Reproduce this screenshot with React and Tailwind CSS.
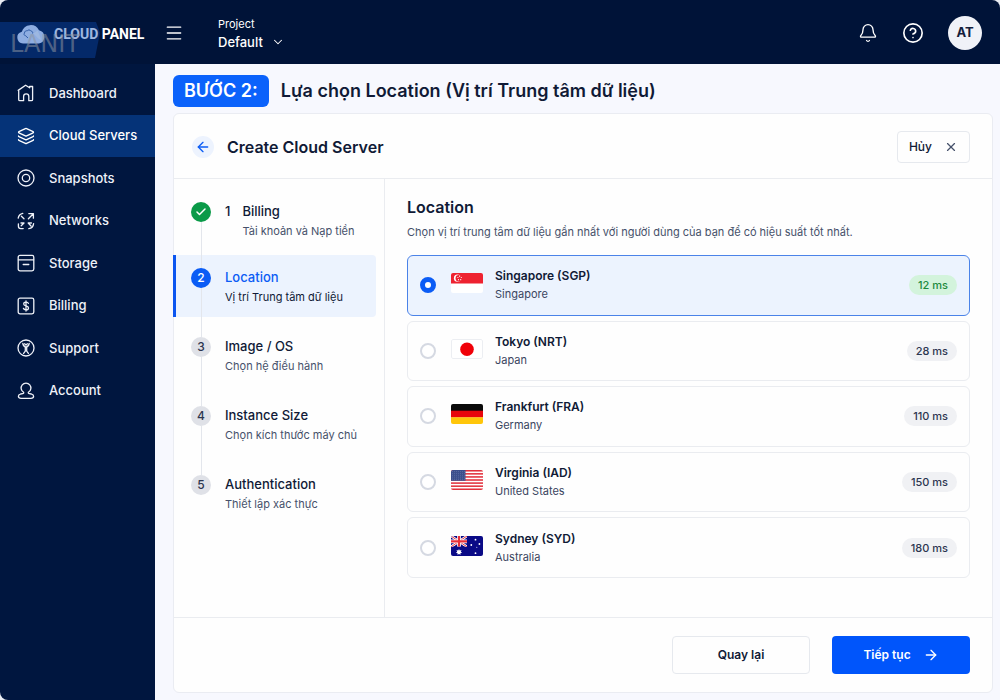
import { useState } from "react";
import { ArrowLeft, ArrowRight, Bell, Check, ChevronDown, CircleHelp, Layers, Menu, X } from "lucide-react";

const MENU = [
  { id: "dashboard", label: "Dashboard", icon: IconHome },
  { id: "servers", label: "Cloud Servers", icon: IconLayers },
  { id: "snapshots", label: "Snapshots", icon: IconSnapshots },
  { id: "networks", label: "Networks", icon: IconNetworks },
  { id: "storage", label: "Storage", icon: IconStorage },
  { id: "billing", label: "Billing", icon: IconBilling },
  { id: "support", label: "Support", icon: IconSupport },
  { id: "account", label: "Account", icon: IconAccount },
];

const STEPS = [
  { num: 1, title: "Billing", text: "Tài khoản và Nạp tiền" },
  { num: 2, title: "Location", text: "Vị trí Trung tâm dữ liệu" },
  { num: 3, title: "Image / OS", text: "Chọn hệ điều hành" },
  { num: 4, title: "Instance Size", text: "Chọn kích thước máy chủ" },
  { num: 5, title: "Authentication", text: "Thiết lập xác thực" },
];

const LOCATIONS = [
  { id: "sgp", name: "Singapore (SGP)", country: "Singapore", ping: 12, flag: FlagSingapore },
  { id: "nrt", name: "Tokyo (NRT)", country: "Japan", ping: 28, flag: FlagJapan },
  { id: "fra", name: "Frankfurt (FRA)", country: "Germany", ping: 110, flag: FlagGermany },
  { id: "iad", name: "Virginia (IAD)", country: "United States", ping: 150, flag: FlagUsa },
  { id: "syd", name: "Sydney (SYD)", country: "Australia", ping: 180, flag: FlagAustralia },
];

/* Sidebar icons */
function Icon({ children }) {
  return (
    <svg
      viewBox="0 0 18 18"
      className="h-[18px] w-[18px] shrink-0"
      fill="none"
      stroke="currentColor"
      strokeWidth="1.3"
      strokeLinecap="round"
      strokeLinejoin="round"
      aria-hidden="true"
    >
      {children}
    </svg>
  );
}

function IconHome() {
  return (
    <Icon>
      <path d="M1.2 6.4 8.6 1.2l4 2.6V2.500h3v13a1.200 1.200 0 0 1-1.200 1.200h-2.600v-4.200a2.600 2.600 0 0 0-5.200 0v4.200H2.900a1.200 1.200 0 0 1-1.200-1.200V6.100" />
    </Icon>
  );
}

function IconLayers() {
  return <Layers className="h-[18px] w-[18px] shrink-0" strokeWidth={1.7} aria-hidden="true" />;
}

function IconSnapshots() {
  return (
    <Icon>
      <circle cx="9" cy="9" r="8" />
      <circle cx="9" cy="9" r="3.7" />
    </Icon>
  );
}

function IconNetworks() {
  return (
    <Icon>
      <path d="M1.200 6.200c.4-2.400 2-4.200 4.600-4.800M4.400 4.200 7 6.800" />
      <path d="M11.800 1.600h4.600v4.600M16 2l-4.600 4.800" />
      <path d="M1.400 11.800v2.400c0 1.400 1 2.400 2.400 2.400h2.400M4.200 13.800 7 11H4" />
      <path d="M16.600 11.600c-.3 2.800-2 4.700-4.800 5M14 14l-2.800-3h3.200" />
    </Icon>
  );
}

function IconStorage() {
  return (
    <Icon>
      <rect x="1.2" y="1.4" width="15.6" height="15.4" rx="1.8" />
      <path d="M1.4 5.8h15.2M6.2 10.5h5.6" />
    </Icon>
  );
}

function IconBilling() {
  return (
    <Icon>
      <rect x="1.2" y="1.2" width="15.6" height="15.6" rx="1.8" />
      <path d="M11.4 6.4c-.3-.9-1.2-1.3-2.4-1.3-1.4 0-2.3.7-2.3 1.8 0 2.6 4.8 1.4 4.8 4 0 1.2-1 1.9-2.5 1.9-1.3 0-2.3-.5-2.6-1.5M9 3.9v10.2" />
    </Icon>
  );
}

function IconSupport() {
  return (
    <Icon>
      <circle cx="9" cy="9" r="8" />
      <path d="M5.800 4.400C6 6.400 7.200 7.600 9 8.400c1.800-.8 3-2 3.200-4M7.600 4.800 9 6l1.400-1.200M8.300 8.400v3.800L6.600 14.400M9.700 8.400v3.800l1.700 2.200" />
    </Icon>
  );
}

function IconAccount() {
  return (
    <Icon>
      <path d="M6.600 10.200a4.900 4.900 0 1 1 4.800 0c-.4.7 0 1.200 1 1.400l2 .4c1.400.4 2.200 1.200 2.200 2.300 0 1.300-1 2-2.600 2H4c-1.600 0-2.600-.7-2.600-2 0-1.100.8-1.900 2.200-2.300l2-.4c1-.2 1.400-.7 1-1.400Z" />
    </Icon>
  );
}

/* Flags */
function FlagFrame({ children }) {
  return (
    <svg viewBox="0 0 32 20" className="mb-1 h-5 w-8 shrink-0 rounded-[2px]" aria-hidden="true">
      {children}
    </svg>
  );
}

function FlagSingapore() {
  return (
    <FlagFrame>
      <rect width="32" height="20" fill="#fff" />
      <rect width="32" height="10.500" fill="#ee2230" />
      <circle cx="6.500" cy="5.200" r="3.600" fill="#fff" />
      <circle cx="7.800" cy="5.200" r="3.200" fill="#ee2230" />
      <g fill="#fff">
        <circle cx="8.600" cy="3.200" r=".6" />
        <circle cx="10.300" cy="4.500" r=".6" />
        <circle cx="9.700" cy="6.700" r=".6" />
        <circle cx="7.500" cy="6.700" r=".6" />
        <circle cx="6.900" cy="4.500" r=".6" />
      </g>
    </FlagFrame>
  );
}

function FlagJapan() {
  return (
    <FlagFrame>
      <rect x=".5" y=".5" width="31" height="19" rx="1.500" fill="#fff" stroke="#eceef2" />
      <circle cx="16" cy="10.300" r="6.800" fill="#f00008" />
    </FlagFrame>
  );
}

function FlagGermany() {
  return (
    <FlagFrame>
      <rect width="32" height="7" fill="#0a0a0a" />
      <rect y="6.700" width="32" height="6.800" fill="#e8060c" />
      <rect y="13.300" width="32" height="6.700" fill="#ffc60a" />
    </FlagFrame>
  );
}

function FlagUsa() {
  return (
    <FlagFrame>
      <rect width="32" height="20" fill="#fff" />
      {[0, 1, 2, 3, 4, 5, 6].map((i) => (
        <rect key={i} y={i * 3.08} width="32" height="1.540" fill="#e2303c" />
      ))}
      <rect width="14.500" height="10.800" fill="#3c4f8c" />
      {[1.6, 3.7, 5.8, 7.9, 9.7].map((y) => (
        <path key={y} d={`M1 ${y}h13`} stroke="#8492bf" strokeWidth=".6" strokeDasharray=".7 1.3" />
      ))}
    </FlagFrame>
  );
}

function FlagAustralia() {
  return (
    <FlagFrame>
      <rect width="32" height="20" fill="#0a0a86" />
      <svg width="16" height="10.800" viewBox="0 0 16 10.800">
        <path d="M0 0 16 10.800M16 0 0 10.800" stroke="#fff" strokeWidth="2.400" />
        <path d="M0 0 16 10.800M16 0 0 10.800" stroke="#e8303a" strokeWidth="1" />
        <path d="M8 0v10.800M0 5.400h16" stroke="#fff" strokeWidth="3.800" />
        <path d="M8 0v10.800M0 5.400h16" stroke="#e8303a" strokeWidth="2.200" />
      </svg>
      <path
        d="m8 13 .8 1.500 1.700-.4-.7 1.600 1.400 1-1.700.4v1.700L8 17.900l-1.500.9v-1.700l-1.700-.4 1.400-1-.7-1.600 1.700.4Z"
        fill="#fff"
      />
      <g fill="#fff">
        <circle cx="24.500" cy="3.700" r=".9" />
        <circle cx="20.300" cy="9" r=".9" />
        <circle cx="28.400" cy="8" r=".9" />
        <circle cx="25.800" cy="11.300" r=".5" />
        <circle cx="24.500" cy="17.200" r=".9" />
      </g>
    </FlagFrame>
  );
}

/* Brand with the translucent LANIT ribbon laid over it */
function Brand() {
  return (
    <a href="#" className="relative flex h-full w-[155px] shrink-0 items-center pt-1 pl-4">
      <svg viewBox="0 0 30 20" className="h-5 w-[30px] shrink-0" aria-hidden="true">
        <path
          d="M7 19.500a6 6 0 0 1-1.200-11.800A9.300 9.300 0 0 1 23 6.200a6.800 6.800 0 0 1-.2 13.300Z"
          fill="#e6efff"
        />
        <path
          d="M8.500 9c0-1.700 1.400-2.600 2.700-2.100.6-1.300 3-1.300 3.700.2 1.500 0 2.200 1.200 1.600 2.400M8.500 9c-1 1.200-.3 2.600 1 2.700l2.500 2.300"
          fill="none"
          stroke="#3c5c94"
          strokeWidth=".9"
        />
        <path d="m17.500 9.500 4.200-3 3.600 9.500-3-1.500Z" fill="#fff" />
      </svg>
      <span className="ml-2 font-['Roboto','Liberation_Sans',sans-serif] text-[14px] font-bold whitespace-nowrap text-white">
        CLOUD PANEL
      </span>
      <span className="absolute top-[22px] left-0 flex h-9 w-[100px] items-center bg-[#0b4cb4]/40 pt-2 pl-[10px] [clip-path:polygon(0_0,96%_0,100%_30%,95%_100%,0_100%)]">
        <span className="font-['DejaVu_Sans','Inter',sans-serif] text-[24px] leading-7 text-[#8d939f]/55">
          LANIT
        </span>
      </span>
    </a>
  );
}

function Header() {
  return (
    <header className="flex h-16 items-center rounded-t-lg bg-[#001338] text-white">
      <Brand />
      <button type="button" aria-label="Menu" className="ml-[9px] pt-[2px]">
        <Menu className="h-5 w-5" strokeWidth={1.6} />
      </button>
      <button type="button" className="ml-[34px] flex flex-col pt-1 text-left">
        <span className="text-[11px] leading-4">Project</span>
        <span className="flex items-center gap-2 text-[13px] leading-5 font-medium">
          Default
          <ChevronDown className="h-[14px] w-[14px]" strokeWidth={1.8} />
        </span>
      </button>
      <div className="mr-[18px] ml-auto flex items-center gap-6 pt-[2px]">
        <button type="button" aria-label="Notifications">
          <Bell className="h-5 w-5" strokeWidth={1.6} />
        </button>
        <button type="button" aria-label="Help">
          <CircleHelp className="h-[22px] w-[22px]" strokeWidth={1.8} />
        </button>
        <button
          type="button"
          className="h-[34px] w-[34px] rounded-full bg-[#f0f2f8] text-[13px] font-bold text-[#14203c]"
        >
          AT
        </button>
      </div>
    </header>
  );
}

function Sidebar() {
  return (
    <aside className="w-[155px] shrink-0 rounded-bl-lg bg-[#00163f] pt-2 text-white">
      <nav className="grid h-[340px] auto-rows-fr">
        {MENU.map(({ id, label, icon: ItemIcon }) => (
          <a
            key={id}
            href={"#" + id}
            className={
              id === "servers"
                ? "flex items-center gap-[14px] bg-[#053378] pl-[17px] text-[13px] font-medium"
                : "flex items-center gap-[14px] pl-[17px] text-[13px] font-medium text-[#eef1f8]"
            }
          >
            <ItemIcon />
            {label}
          </a>
        ))}
      </nav>
    </aside>
  );
}

function Step({ step, current, last }) {
  const done = step.num < current;
  const active = step.num === current;

  return (
    <li>
      <div
        className={
          active
            ? "-ml-px flex h-[62px] rounded-r border-l-[3px] border-[#0b55f0] bg-[#ecf3fe] pl-[15px]"
            : "-ml-px flex h-[62px] border-l-[3px] border-transparent pl-[15px]"
        }
      >
        <div className="flex w-5 flex-col items-center">
          <div className={step.num === 1 ? "h-[13px] w-px" : "h-[13px] w-px bg-[#e3e6ec]"} />
          {done ? (
            <span className="flex h-5 w-5 items-center justify-center rounded-full bg-[#0a9a48] text-white">
              <Check className="h-3 w-3" strokeWidth={3} />
            </span>
          ) : (
            <span
              className={
                active
                  ? "flex h-5 w-5 items-center justify-center rounded-full bg-[#0b5cf5] text-[12px] font-medium text-white"
                  : "flex h-5 w-5 items-center justify-center rounded-full bg-[#dfe1e7] text-[12px] font-medium text-[#2c3650]"
              }
            >
              {step.num}
            </span>
          )}
          {!last && <div className="w-px flex-1 bg-[#e3e6ec]" />}
        </div>
        <div className="flex gap-3 pt-3 pl-[14px]">
          {done && <span className="text-[13px] leading-5 font-medium text-[#101a36]">{step.num}</span>}
          <div>
            <p
              className={
                active
                  ? "text-[13px] leading-5 font-medium text-[#0b5cf5]"
                  : "text-[13px] leading-5 font-medium text-[#101a36]"
              }
            >
              {step.title}
            </p>
            <p
              className={
                active
                  ? "text-[11px] leading-5 whitespace-nowrap text-[#101a36]"
                  : "text-[11px] leading-5 whitespace-nowrap text-[#46516a]"
              }
            >
              {step.text}
            </p>
          </div>
        </div>
      </div>
      {!last && <div className={done ? "ml-[27px] h-1 w-px bg-[#e3e6ec]" : "ml-[27px] h-[7px] w-px bg-[#e3e6ec]"} />}
    </li>
  );
}

function LocationOption({ location, checked, onSelect }) {
  const Flag = location.flag;

  return (
    <label
      className={
        checked
          ? "flex cursor-pointer items-center rounded-md border border-[#4b83e8] bg-[#ecf3fe] px-3"
          : "flex cursor-pointer items-center rounded-md border border-[#eaecf0] bg-[#fefefe] px-3"
      }
    >
      <input
        type="radio"
        name="location"
        value={location.id}
        checked={checked}
        onChange={() => onSelect(location.id)}
        className="mr-[15px] h-4 w-4 shrink-0 appearance-none rounded-full border-2 border-[#d5d9e2] bg-white checked:border-[5px] checked:border-[#0b5cf5]"
      />
      <Flag />
      <span className="ml-3 flex-1">
        <span className="block text-[12px] leading-[18px] font-semibold text-[#101a36]">{location.name}</span>
        <span className="block text-[11px] leading-[18px] text-[#3a4560]">{location.country}</span>
      </span>
      <span
        className={
          location.ping < 20
            ? "rounded-full bg-[#d3f3dc] px-[9px] text-[11px] leading-5 font-medium text-[#1c8a3c]"
            : "rounded-full bg-[#f0f1f4] px-[9px] text-[11px] leading-5 font-medium text-[#2c3650]"
        }
      >
        {location.ping} ms
      </span>
    </label>
  );
}

export default function App() {
  const [location, setLocation] = useState("sgp");

  return (
    <div className="flex min-h-screen flex-col bg-[#e9ecf3] font-['Inter','Noto_Sans',sans-serif] text-[#101a36]">
      <Header />

      <div className="flex flex-1">
        <Sidebar />

        <main className="flex min-w-0 flex-1 flex-col bg-[#f7f8fe] pt-[11px] pr-[7px] pb-[7px] pl-[18px]">
          <h1 className="flex items-center gap-3 text-[18px] leading-8 font-semibold">
            <span className="rounded-md bg-[#0b62fb] px-[11px] text-white">BƯỚC 2:</span>
            Lựa chọn Location (Vị trí Trung tâm dữ liệu)
          </h1>

          <section className="mt-[6px] flex flex-1 flex-col rounded-md border border-[#eaecf2] bg-[#fefefe]">
            {/* Card title */}
            <div className="flex h-[65px] items-center border-b border-[#eaecf0] pt-[2px] pr-[22px] pl-[18px]">
              <button
                type="button"
                aria-label="Back"
                className="flex h-[22px] w-[22px] items-center justify-center rounded-full bg-[#edf3fe] text-[#0b5cf5]"
              >
                <ArrowLeft className="h-4 w-4" strokeWidth={2} />
              </button>
              <h2 className="ml-[13px] text-[16px] font-semibold">Create Cloud Server</h2>
              <button
                type="button"
                className="ml-auto flex h-8 items-center gap-3 rounded border border-[#e6e9ee] px-[11px] text-[12px] font-medium"
              >
                Hủy
                <X className="h-[14px] w-[14px] text-[#46516a]" strokeWidth={2} />
              </button>
            </div>

            <div className="flex flex-1">
              {/* Steps */}
              <ol className="w-[211px] shrink-0 border-r border-[#eaecf0] pt-[10px] pr-2">
                {STEPS.map((step) => (
                  <Step key={step.num} step={step} current={2} last={step.num === STEPS.length} />
                ))}
              </ol>

              {/* Locations */}
              <div className="min-w-0 flex-1 pt-4 pr-[22px] pl-[22px]">
                <h3 className="text-[16px] leading-6 font-semibold">Location</h3>
                <p className="mt-[3px] text-[11px] leading-5 text-[#46516a]">
                  Chọn vị trí trung tâm dữ liệu gần nhất với người dùng của bạn để có hiệu suất tốt nhất.
                </p>
                <div className="mt-[13px] grid min-h-[323px] auto-rows-fr gap-[5px]">
                  {LOCATIONS.map((item) => (
                    <LocationOption
                      key={item.id}
                      location={item}
                      checked={item.id === location}
                      onSelect={setLocation}
                    />
                  ))}
                </div>
              </div>
            </div>

            {/* Actions */}
            <div className="flex h-[75px] items-center justify-end gap-[22px] border-t border-[#eaecf0] pr-[22px] text-[12px] font-semibold">
              <button type="button" className="h-[38px] w-[138px] rounded border border-[#e6e9ee]">
                Quay lại
              </button>
              <button
                type="button"
                className="flex h-[38px] w-[138px] items-center justify-center gap-3 rounded bg-[#0055fb] text-white"
              >
                Tiếp tục
                <ArrowRight className="h-4 w-4" strokeWidth={2} />
              </button>
            </div>
          </section>
        </main>
      </div>
    </div>
  );
}
